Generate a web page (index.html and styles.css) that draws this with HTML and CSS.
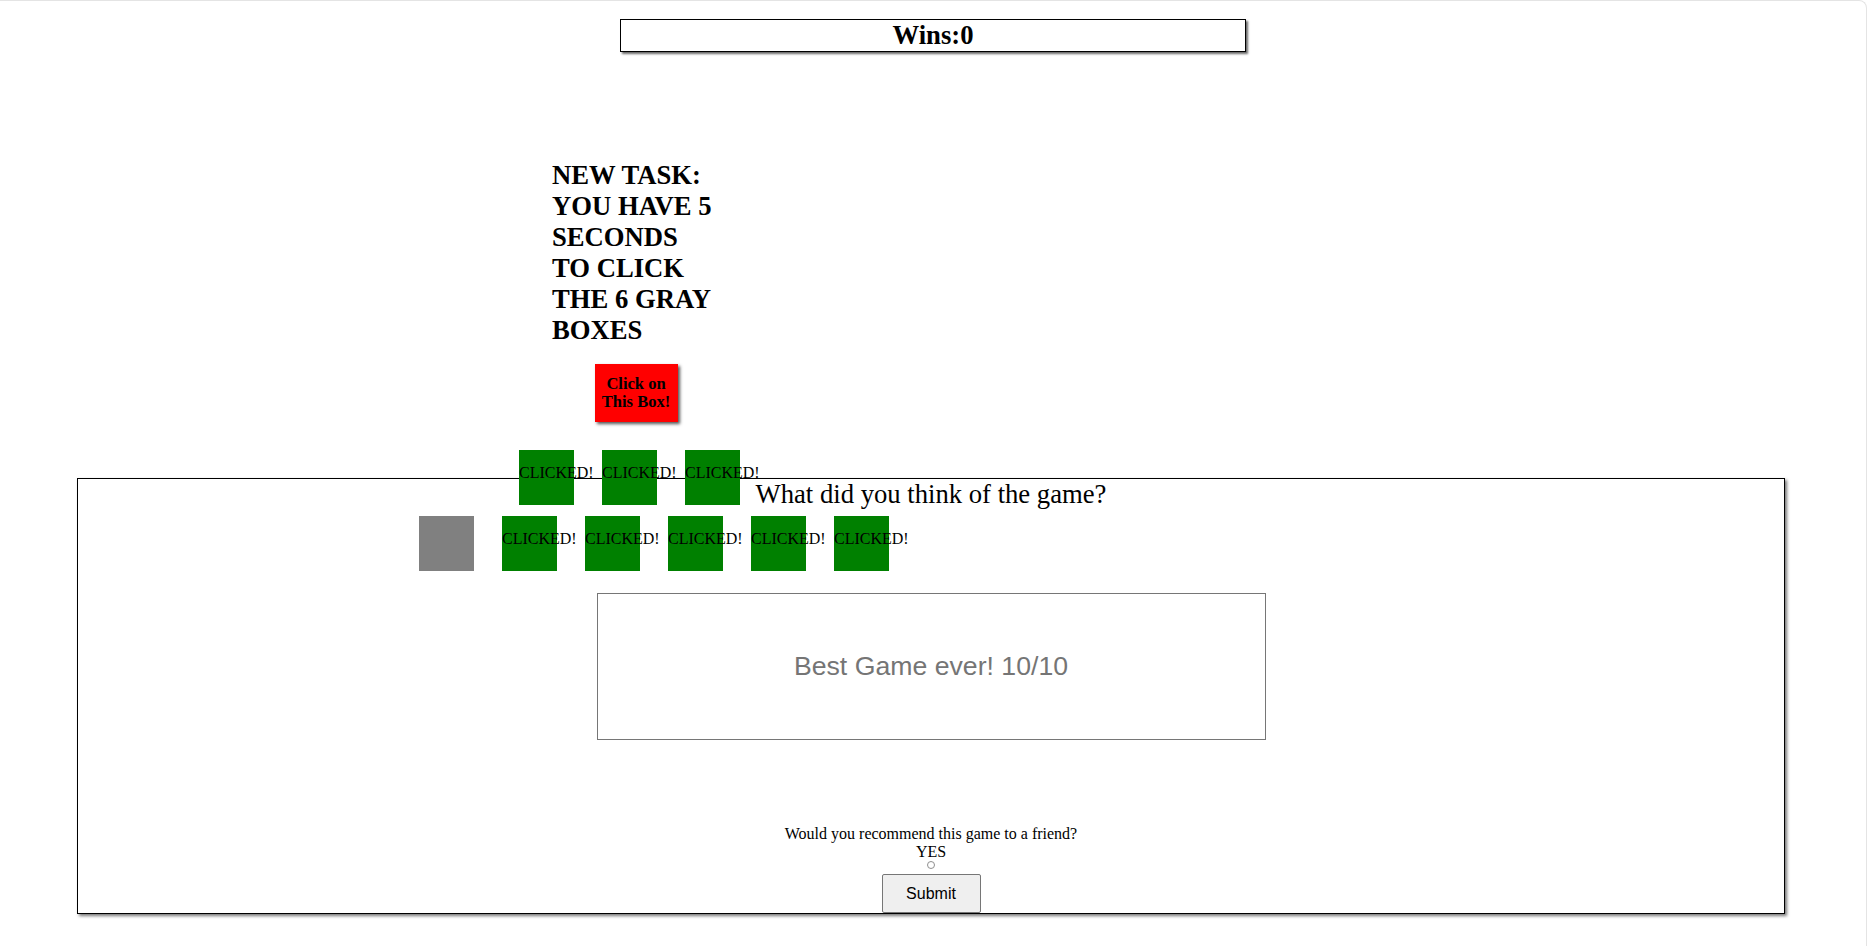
FILE: index.html
```html
<!DOCTYPE html>
<html lang="en">
<head>
<meta charset="utf-8">
<title>Click Game</title>
<link rel="stylesheet" href="styles.css">
</head>
<body>
<div class="page">
  <div class="wins">Wins:0</div>

  <div class="task">
    <div class="task-text">NEW TASK: YOU HAVE 5 SECONDS TO CLICK THE 6 GRAY BOXES</div>
    <div class="red-box">Click on<br>This Box!</div>
  </div>

  <form class="feedback">
    <div class="question">What did you think of the game?</div>
    <input class="answer" type="text" placeholder="Best Game ever! 10/10">
    <div class="recommend">Would you recommend this game to a friend?</div>
    <label class="yes">YES</label>
    <input class="radio" type="radio" name="rec">
    <button class="submit" type="button">Submit</button>
  </form>

  <div class="board">
    <div class="row row-top">
      <div class="box green">CLICKED!</div>
      <div class="box green">CLICKED!</div>
      <div class="box green">CLICKED!</div>
    </div>
    <div class="row">
      <div class="box gray"></div>
      <div class="box green">CLICKED!</div>
      <div class="box green">CLICKED!</div>
      <div class="box green">CLICKED!</div>
      <div class="box green">CLICKED!</div>
      <div class="box green">CLICKED!</div>
    </div>
  </div>
</div>
</body>
</html>
```

FILE: styles.css
```css
html, body {
  margin: 0;
  padding: 0;
  background: #ffffff;
}

body {
  font-family: "Liberation Serif", "Times New Roman", serif;
  color: #000;
  width: 1871px;
  height: 946px;
  overflow: hidden;
}

.page {
  position: relative;
  width: 1867px;
  box-sizing: border-box;
  min-height: 960px;
  border-top: 1px solid #e4e4e4;
  border-right: 1px solid #e4e4e4;
  border-top-right-radius: 8px;
  padding-top: 18px;
}

.wins {
  width: 624px;
  margin: 0 auto;
  border: 1px solid #000;
  box-shadow: 2px 2px 2px #6a6a6a;
  font-weight: bold;
  font-size: 26.67px;
  line-height: 31px;
  text-align: center;
}

.task {
  width: 168px;
  margin: 108px 0 0 552px;
}

.task-text {
  font-weight: bold;
  font-size: 26.67px;
  line-height: 31px;
}

.red-box {
  width: 83px;
  height: 58px;
  margin: 18px auto 0;
  background: #ff0000;
  box-shadow: 2px 2px 3px #555;
  display: flex;
  align-items: center;
  justify-content: center;
  text-align: center;
  font-weight: bold;
  font-size: 16.5px;
  line-height: 18px;
}

.feedback {
  width: 1708px;
  box-sizing: border-box;
  margin: 56px 0 0 77px;
  border: 1px solid #000;
  box-shadow: 2px 2px 3px #777;
  display: flex;
  flex-direction: column;
  align-items: center;
  text-align: center;
}

.question {
  font-size: 26.67px;
  line-height: 31px;
}

.answer {
  width: 669px;
  height: 147px;
  box-sizing: border-box;
  margin: 83px 0 85px;
  padding: 0;
  border: 1px solid #767676;
  font-family: "Liberation Sans", Arial, sans-serif;
  font-size: 26.67px;
  text-align: center;
  color: #333;
}

.answer::placeholder {
  color: #757575;
}

.recommend,
.yes {
  font-size: 16px;
  line-height: 17.5px;
}

.radio {
  appearance: none;
  -webkit-appearance: none;
  width: 8px;
  height: 8px;
  margin: 1px 0 0;
  border: 1px solid #8f8f8f;
  border-radius: 50%;
  box-sizing: border-box;
  background: #fff;
}

.submit {
  width: 99px;
  height: 39px;
  margin-top: 5px;
  box-sizing: border-box;
  background: #efefef;
  border: 1px solid #767676;
  border-radius: 2px;
  font-family: "Liberation Sans", Arial, sans-serif;
  font-size: 16px;
  color: #000;
  padding: 0;
}

.board {
  position: absolute;
  left: 419px;
  top: 449px;
  z-index: 1;
  display: flex;
  flex-direction: column;
  gap: 11px;
}

.row {
  display: flex;
  gap: 28px;
}

.row-top {
  padding-left: 100px;
}

.box {
  width: 55px;
  height: 55px;
  box-sizing: border-box;
  padding-bottom: 9px;
  display: flex;
  align-items: center;
  white-space: nowrap;
  font-size: 16px;
  line-height: 18px;
}

.green {
  background: #008000;
}

.gray {
  background: #808080;
}
```
